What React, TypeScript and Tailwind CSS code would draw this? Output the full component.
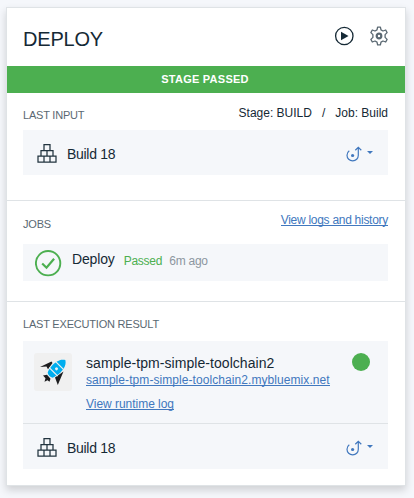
import React from "react";

function Blocks() {
  return (
    <svg width="20" height="20" viewBox="0 0 20 20" fill="none" stroke="#22343f" strokeWidth="1.25" className="shrink-0">
      <path d="M7 1.500h6v6h-6zM4 7.500h6v5.500h-6zM10 7.500h6v5.500h-6zM1 13h6v6h-6zM7 13h6v6h-6zM13 13h6v6h-6z" />
    </svg>
  );
}

function DeployTo() {
  return (
    <div className="flex text-[#4178be]">
      <svg width="16" height="16" viewBox="0 0 16 16" fill="none" stroke="currentColor" strokeWidth="1.200">
        <path d="M3.300 4.700C1.700 5.800 1 7.200 1 9.200c0 3.200 2.500 5.700 5.700 5.700s5.600-2.500 5.600-5.700V1.700M9.300 4.300l3-2.900 3 2.900" />
        <circle cx="6.600" cy="9.500" r="1.600" fill="currentColor" stroke="none" />
      </svg>
      <svg width="6" height="3" viewBox="0 0 6 3" className="ml-[5px] mt-[5px]">
        <path d="M0 0h6L3 3z" fill="currentColor" />
      </svg>
    </div>
  );
}

function BuildRow() {
  return (
    <div className="flex h-[45px] items-center pl-3.5 pr-[15px]">
      <Blocks />
      <span className="ml-2.5 mt-[3px] text-[14px] leading-4 tracking-[-0.3px]">Build 18</span>
      <div className="ml-auto mt-[3px]">
        <DeployTo />
      </div>
    </div>
  );
}

function Heading({ children }: { children: React.ReactNode }) {
  return <h2 className="text-[11px] leading-4 tracking-[-0.2px] text-[#5a6872]">{children}</h2>;
}

function Rocket() {
  return (
    <div className="size-[38px] shrink-0 rounded-[3px] bg-[#f0f0f0]">
      <svg width="38" height="38" viewBox="0 0 38 38">
        <path d="M6 14 17.500 8.500 18.500 10 14 16.200 12.500 13.600zM29.500 18.500 23.800 32 22.500 28.500 21 24.500zM9 22.500l4-.800 3.500 4-1 3-2-1.500-3 1.500 1-3.500z" fill="#1d1d1f" />
        <g transform="translate(22.500 15.800) rotate(-45)">
          <path d="M-9-3.500C-5-5.500 1-5.800 5-5c3.500.700 6 2.500 7.500 5C11 2.500 8.500 4.300 5 5c-4 .800-10 .500-14-1.500-1.300-2-1.300-5 0-7z" fill="#00aeef" />
          <path d="M-4.300-6V6M4.500-6V6" stroke="#f0f0f0" strokeWidth="1.200" />
          <circle r="1.500" fill="#f0f0f0" />
        </g>
      </svg>
    </div>
  );
}

export default function App() {
  return (
    <div className="h-[498px] w-[414px] bg-[#f5f7fb] pl-1.5 pt-[7px] font-['Liberation_Sans',Arial,sans-serif] text-[#152935]">
      <main className="h-[479px] w-[400px] border border-[#dfe3e6] bg-white shadow-[0_4px_8px_rgba(0,0,0,0.16)]">
        <header className="flex h-[58px] items-center justify-between pl-4 pr-4">
          <h1 className="mt-[3px] text-[20px] leading-6 tracking-[-0.200px]">DEPLOY</h1>
          <div className="-mt-[2px] flex items-center gap-[15px]">
            <svg width="20" height="20" viewBox="0 0 20 20">
              <circle cx="10.300" cy="10" r="8.700" fill="none" stroke="#152935" strokeWidth="1.300" />
              <path d="M7 5.800 14.500 10 7 14.200z" fill="#152935" />
            </svg>
            <svg width="20" height="20" viewBox="0 0 20 20" fill="none" stroke="#5a6872">
              <path d="M8.600 1.200h2.800l.6 2.700 2 1.100 2.700-1 1.400 2.600-2 2v2.800l2 2-1.400 2.600-2.700-1-2 1.100-.6 2.700H8.600L8 16.100 6 15l-2.700 1-1.400-2.600 2-2V8.600l-2-2L3.300 4 6 5l2-1.100z" strokeWidth="1.300" strokeLinejoin="round" />
              <circle cx="10" cy="10" r="2.300" strokeWidth="2.200" />
            </svg>
          </div>
        </header>
        <div className="h-[27px] bg-[#4caf50] pr-[2px] text-center text-[11px] font-bold leading-[27px] tracking-[0.25px] text-white">STAGE PASSED</div>
        <section className="h-[108px] border-b border-[#dfe3e6] pl-4 pr-[17px] pt-3">
          <div className="flex h-[25px] justify-between">
            <div className="mt-0.5"><Heading>LAST INPUT</Heading></div>
            <div className="flex text-[12px] leading-4">
              <span>Stage: BUILD</span><span className="mx-[10px]">/</span><span>Job: Build</span>
            </div>
          </div>
          <div className="bg-[#f5f7fa]"><BuildRow /></div>
        </section>
        <section className="h-[101px] border-b border-[#dfe3e6] pl-4 pr-[17px] pt-[11px]">
          <div className="flex h-8 justify-between">
            <div className="mt-1"><Heading>JOBS</Heading></div>
            <a className="mt-[13px] h-px border-b border-[#4178be] text-[12px] leading-4 text-[#4178be]"><span className="relative -top-[13px] tracking-[-0.28px]">View logs and history</span></a>
          </div>
          <div className="flex h-[37px] bg-[#f5f7fa] pl-3 pt-1.5">
            <svg width="27" height="27" viewBox="0 0 27 27" fill="none" stroke="#4caf50">
              <circle cx="13.100" cy="13.200" r="12.200" strokeWidth="1.900" />
              <path d="M7.200 13.500l4.300 4.200 7.600-9" strokeWidth="2.200" />
            </svg>
            <div className="ml-[10px] flex whitespace-nowrap text-[12px] leading-[18px]">
              <span className="text-[14px] tracking-[-0.15px]">Deploy</span>
              <span className="ml-[9px] mt-0.5 tracking-[-0.250px] text-[#4caf50]">Passed</span>
              <span className="ml-[7px] mt-0.5 tracking-[-0.250px] text-[#8c96a0]">6m ago</span>
            </div>
          </div>
        </section>
        <section className="pl-4 pr-[17px] pt-3.5">
          <div className="h-[25px]"><Heading>LAST EXECUTION RESULT</Heading></div>
          <div className="bg-[#f5f7fa]">
            <div className="flex h-[83px] border-b border-[#dfe3e6] pl-[11px] pr-[18px] pt-3">
              <Rocket />
              <div className="ml-3.5 flex flex-col items-start whitespace-nowrap text-[12px] leading-4">
                <span className="mt-0.5 text-[14px] tracking-[0.06px]">sample-tpm-simple-toolchain2</span>
                <a className="h-[15px] border-b border-[#4178be] leading-[18px] tracking-[0.070px] text-[#4178be]">sample-tpm-simple-toolchain2.mybluemix.net</a>
                <a className="mt-[9px] h-[15px] border-b border-[#4178be] leading-[18px] tracking-[-0.030px] text-[#4178be]">View runtime log</a>
              </div>
              <div className="ml-auto size-[18px] shrink-0 rounded-full bg-[#4caf50]" />
            </div>
            <BuildRow />
          </div>
        </section>
      </main>
    </div>
  );
}
